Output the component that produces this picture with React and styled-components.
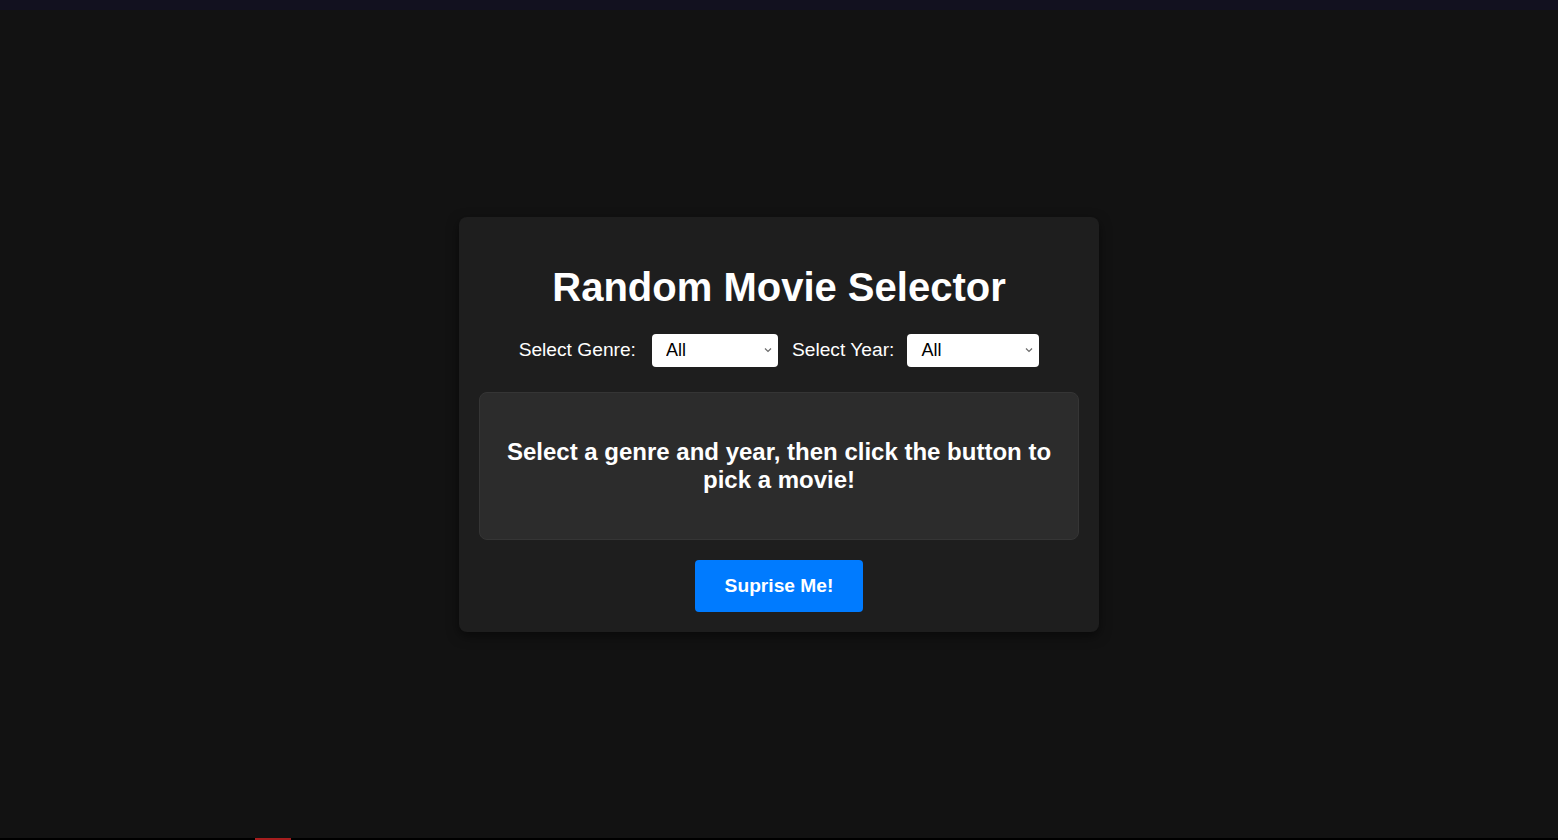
import React from "react";
import styled, { createGlobalStyle } from "styled-components";

const GlobalStyle = createGlobalStyle`
  html, body {
    margin: 0;
    padding: 0;
    background: #121212;
    font-family: "Liberation Sans", Arial, sans-serif;
    color: #ffffff;
  }
  #root { height: 840px; }
`;

const Page = styled.div`
  height: 840px;
  display: flex;
  flex-direction: column;
  background: #121212;
`;

const TopStrip = styled.div`
  height: 10px;
  background: #12111f;
  flex: none;
`;

const Main = styled.main`
  flex: 1;
  display: flex;
  align-items: center;
  justify-content: center;
`;

const BottomStrip = styled.div`
  height: 2px;
  background: #000000;
  flex: none;
  display: flex;
  padding-left: 255px;
`;

const RedMark = styled.div`
  width: 36px;
  height: 2px;
  background: #a61d1d;
`;

const Card = styled.section`
  width: 640px;
  box-sizing: border-box;
  padding: 20px;
  background: #1e1e1e;
  border-radius: 8px;
  box-shadow: 0 4px 12px rgba(0, 0, 0, 0.5);
  display: flex;
  flex-direction: column;
  align-items: center;
`;

const Title = styled.h1`
  margin: 27px 0 24px;
  font-size: 40px;
  line-height: 46px;
  font-weight: 700;
  color: #ffffff;
`;

const Controls = styled.div`
  display: flex;
  align-items: center;
  justify-content: center;
  height: 33px;
  margin-bottom: 25px;
`;

const Label = styled.label`
  font-size: 19.2px;
  color: #ffffff;
  margin-right: ${(p) => p.$gap}px;
`;

const SelectWrap = styled.div`
  position: relative;
  width: ${(p) => p.$w}px;
  height: 33px;
  margin-right: ${(p) => p.$after || 0}px;
`;

const Select = styled.select`
  appearance: none;
  -webkit-appearance: none;
  width: 100%;
  height: 33px;
  box-sizing: border-box;
  border: none;
  border-radius: 4px;
  background: #ffffff;
  color: #000000;
  font-family: "Liberation Sans", Arial, sans-serif;
  font-size: 18px;
  padding: 0 20px 0 14px;
  outline: none;
`;

const Chevron = styled.svg`
  position: absolute;
  right: 6px;
  top: 13px;
  width: 8px;
  height: 6px;
  pointer-events: none;
`;

const MessageBox = styled.div`
  width: 600px;
  box-sizing: border-box;
  padding: 25px 20px;
  background: #2c2c2c;
  border: 1px solid #353535;
  border-radius: 8px;
  text-align: center;
  margin-bottom: 20px;
`;

const Message = styled.h2`
  margin: 20px 0;
  font-size: 24px;
  line-height: 28px;
  font-weight: 700;
  color: #ffffff;
`;

const Button = styled.button`
  height: 52px;
  background: #007bff;
  color: #ffffff;
  border: none;
  border-radius: 4px;
  padding: 0 30px;
  font-family: "Liberation Sans", Arial, sans-serif;
  font-size: 19.2px;
  line-height: 22px;
  font-weight: 700;
  cursor: pointer;
`;

const ChevronIcon = () => (
  <Chevron viewBox="0 0 8 6" aria-hidden="true">
    <path d="M1 1.5 L4 4.5 L7 1.5" fill="none" stroke="#6b6b6b" strokeWidth="1.2" />
  </Chevron>
);

export default function App() {
  return (
    <>
      <GlobalStyle />
      <Page>
        <TopStrip />
        <Main>
          <Card>
            <Title>Random Movie Selector</Title>
            <Controls>
              <Label htmlFor="genre" $gap={16}>Select Genre:</Label>
              <SelectWrap $w={126} $after={14}>
                <Select id="genre" defaultValue="All">
                  <option>All</option>
                  <option>Action</option>
                  <option>Comedy</option>
                  <option>Drama</option>
                  <option>Horror</option>
                </Select>
                <ChevronIcon />
              </SelectWrap>
              <Label htmlFor="year" $gap={13}>Select Year:</Label>
              <SelectWrap $w={132}>
                <Select id="year" defaultValue="All">
                  <option>All</option>
                  <option>2024</option>
                  <option>2023</option>
                  <option>2022</option>
                </Select>
                <ChevronIcon />
              </SelectWrap>
            </Controls>
            <MessageBox>
              <Message>
                Select a genre and year, then click the button to pick a movie!
              </Message>
            </MessageBox>
            <Button>Suprise Me!</Button>
          </Card>
        </Main>
        <BottomStrip>
          <RedMark />
        </BottomStrip>
      </Page>
    </>
  );
}
